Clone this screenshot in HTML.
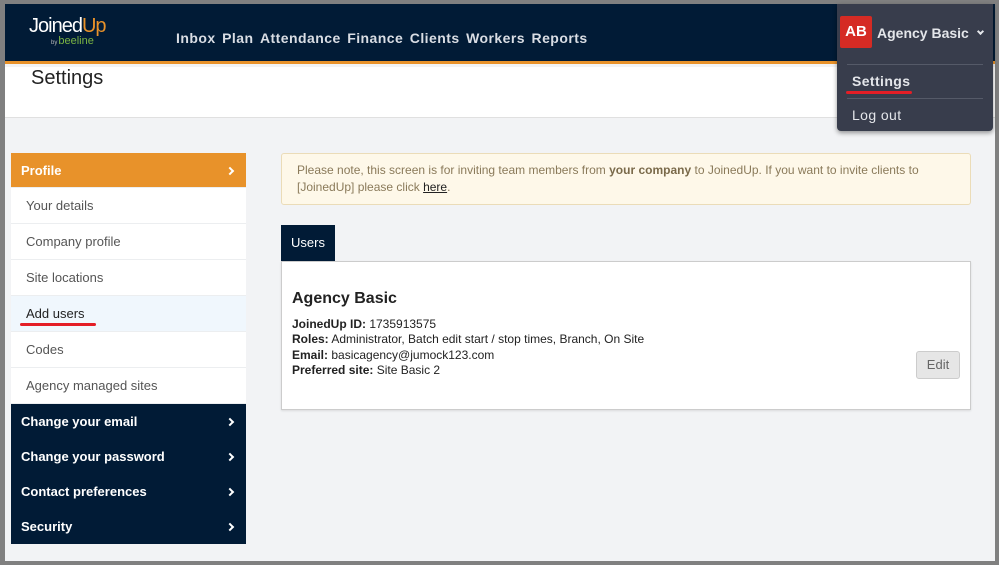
<!DOCTYPE html>
<html><head><meta charset="utf-8"><style>
*{margin:0;padding:0;box-sizing:border-box}
body{width:999px;height:565px;background:#808080;font-family:"Liberation Sans",Arial,sans-serif;position:relative;overflow:hidden}
.win{position:absolute;left:5px;top:4px;width:990px;height:557px;background:#f2f3f5}
.hdr{position:absolute;left:0;top:0;width:990px;height:60px;background:#011b36;border-bottom:3px solid #e8922a}
.logo{position:absolute;left:24px;top:11px;color:#fff;font-size:20px;letter-spacing:-1px}
.logo b{font-weight:normal;color:#e8922a}
.by{position:absolute;left:46px;top:31px;font-size:11px;color:#7bb443}
.by small{font-size:6px;color:#bbb;margin-right:1px}
.nav{position:absolute;left:171px;top:26px;color:#d9dde4;font-size:14px;letter-spacing:.45px;font-weight:bold}
.nav span{margin-right:6.5px}
.top{position:absolute;left:0;top:63px;width:990px;height:51px;background:#fff;border-bottom:1px solid #e0e0e0}
.top h1{position:absolute;left:26px;top:0px;font-weight:normal;font-size:20px;color:#222}
.dd{position:absolute;left:832px;top:0;width:156px;height:127px;background:#383d4c;border-radius:0 0 4px 4px;box-shadow:0 2px 5px rgba(0,0,0,.4)}
.ab{position:absolute;left:3px;top:12px;width:32px;height:32px;background:#d52b24;color:#fff;font-weight:bold;font-size:15px;text-align:center;line-height:32px;border-radius:2px}
.dd .nm{position:absolute;left:40px;top:21px;color:#e4e6ea;font-size:14px;font-weight:bold;letter-spacing:0}
.dd .sep{position:absolute;left:10px;width:136px;height:1px;background:#555a68}
.dd .it{position:absolute;left:15px;color:#e4e6ea;font-size:14px;font-weight:bold;letter-spacing:.4px}
.red{position:absolute;height:3px;background:#e41e26;border-radius:2px}
.side{position:absolute;left:6px;top:149px;width:235px}
.side div{height:36px;line-height:36px;padding-left:15px;font-size:13px;color:#555;background:#fff;border-bottom:1px solid #eceef0;position:relative}
.side .pr{background:#e8922a;color:#fff;font-weight:bold;padding-left:10px;height:35px;line-height:35px}
.side .dk{background:#011b36;color:#fff;font-weight:bold;padding-left:10px;height:35px;line-height:35px;border:none}
.side .pr:after,.side .dk:after{content:"";position:absolute;right:13px;top:15px;width:4px;height:4px;border-top:2px solid #fff;border-right:2px solid #fff;transform:rotate(45deg)}
.note{position:absolute;left:276px;top:149px;width:690px;height:52px;background:#fef8e9;border:1px solid #ebdcb8;border-radius:3px;padding:8px 15px;font-size:12px;line-height:17px;color:#8a7a5a}
.note b{color:#7a6a4a}.note u{color:#222}
.tab{position:absolute;left:276px;top:221px;width:54px;height:36px;background:#011b36;color:#fff;font-size:13px;padding:10px 0 0 10px}
.tab:after{content:"";position:absolute;left:11px;bottom:-6px;border:6px solid transparent;border-top-color:#011b36;border-bottom:0}
.card{position:absolute;left:276px;top:257px;width:690px;height:149px;background:#fff;border:1px solid #ccc;box-shadow:0 1px 2px rgba(0,0,0,.1)}
.card h2{position:absolute;left:10px;top:28px;font-size:16px;color:#222}
.card p{position:absolute;left:10px;top:55px;font-size:12px;line-height:15.3px;color:#222}
.edit{position:absolute;left:634px;top:89px;width:44px;height:28px;background:#e6e6e6;border:1px solid #ccc;border-radius:3px;font-size:13px;color:#666;text-align:center;line-height:26px}
.chev{position:absolute;left:141px;top:25px;width:5px;height:5px;border-right:2px solid #e4e6ea;border-bottom:2px solid #e4e6ea;transform:rotate(45deg)}
</style></head><body>
<div class="win">
<div class="hdr">
<div class="logo">Joined<b>Up</b></div>
<div class="by"><small>by</small>beeline</div>
<div class="nav"><span>Inbox</span><span>Plan</span><span>Attendance</span><span>Finance</span><span>Clients</span><span>Workers</span><span>Reports</span></div>
</div>
<div class="top"><h1>Settings</h1></div>
<div class="dd">
<div class="ab">AB</div><div class="nm">Agency Basic</div><div class="chev"></div>
<div class="sep" style="top:60px"></div>
<div class="it" style="top:69px">Settings</div>
<div class="red" style="left:9px;top:87px;width:66px"></div>
<div class="sep" style="top:94px"></div>
<div class="it" style="top:103px;font-weight:normal">Log out</div>
</div>
<div class="side">
<div class="pr">Profile</div>
<div>Your details</div><div>Company profile</div><div>Site locations</div>
<div style="background:#f0f7fd;color:#222">Add users</div>
<div>Codes</div><div>Agency managed sites</div>
<div class="dk">Change your email</div><div class="dk">Change your password</div><div class="dk">Contact preferences</div><div class="dk">Security</div>
</div>
<div class="red" style="left:15px;top:319px;width:76px"></div>
<div class="note">Please note, this screen is for inviting team members from <b>your company</b> to JoinedUp. If you want to invite clients to [JoinedUp] please click <u>here</u>.</div>
<div class="tab">Users</div>
<div class="card">
<h2>Agency Basic</h2>
<p><b>JoinedUp ID:</b> 1735913575<br><b>Roles:</b> Administrator, Batch edit start / stop times, Branch, On Site<br><b>Email:</b> basicagency@jumock123.com<br><b>Preferred site:</b> Site Basic 2</p>
<div class="edit">Edit</div>
</div>
</div>
</body></html>
